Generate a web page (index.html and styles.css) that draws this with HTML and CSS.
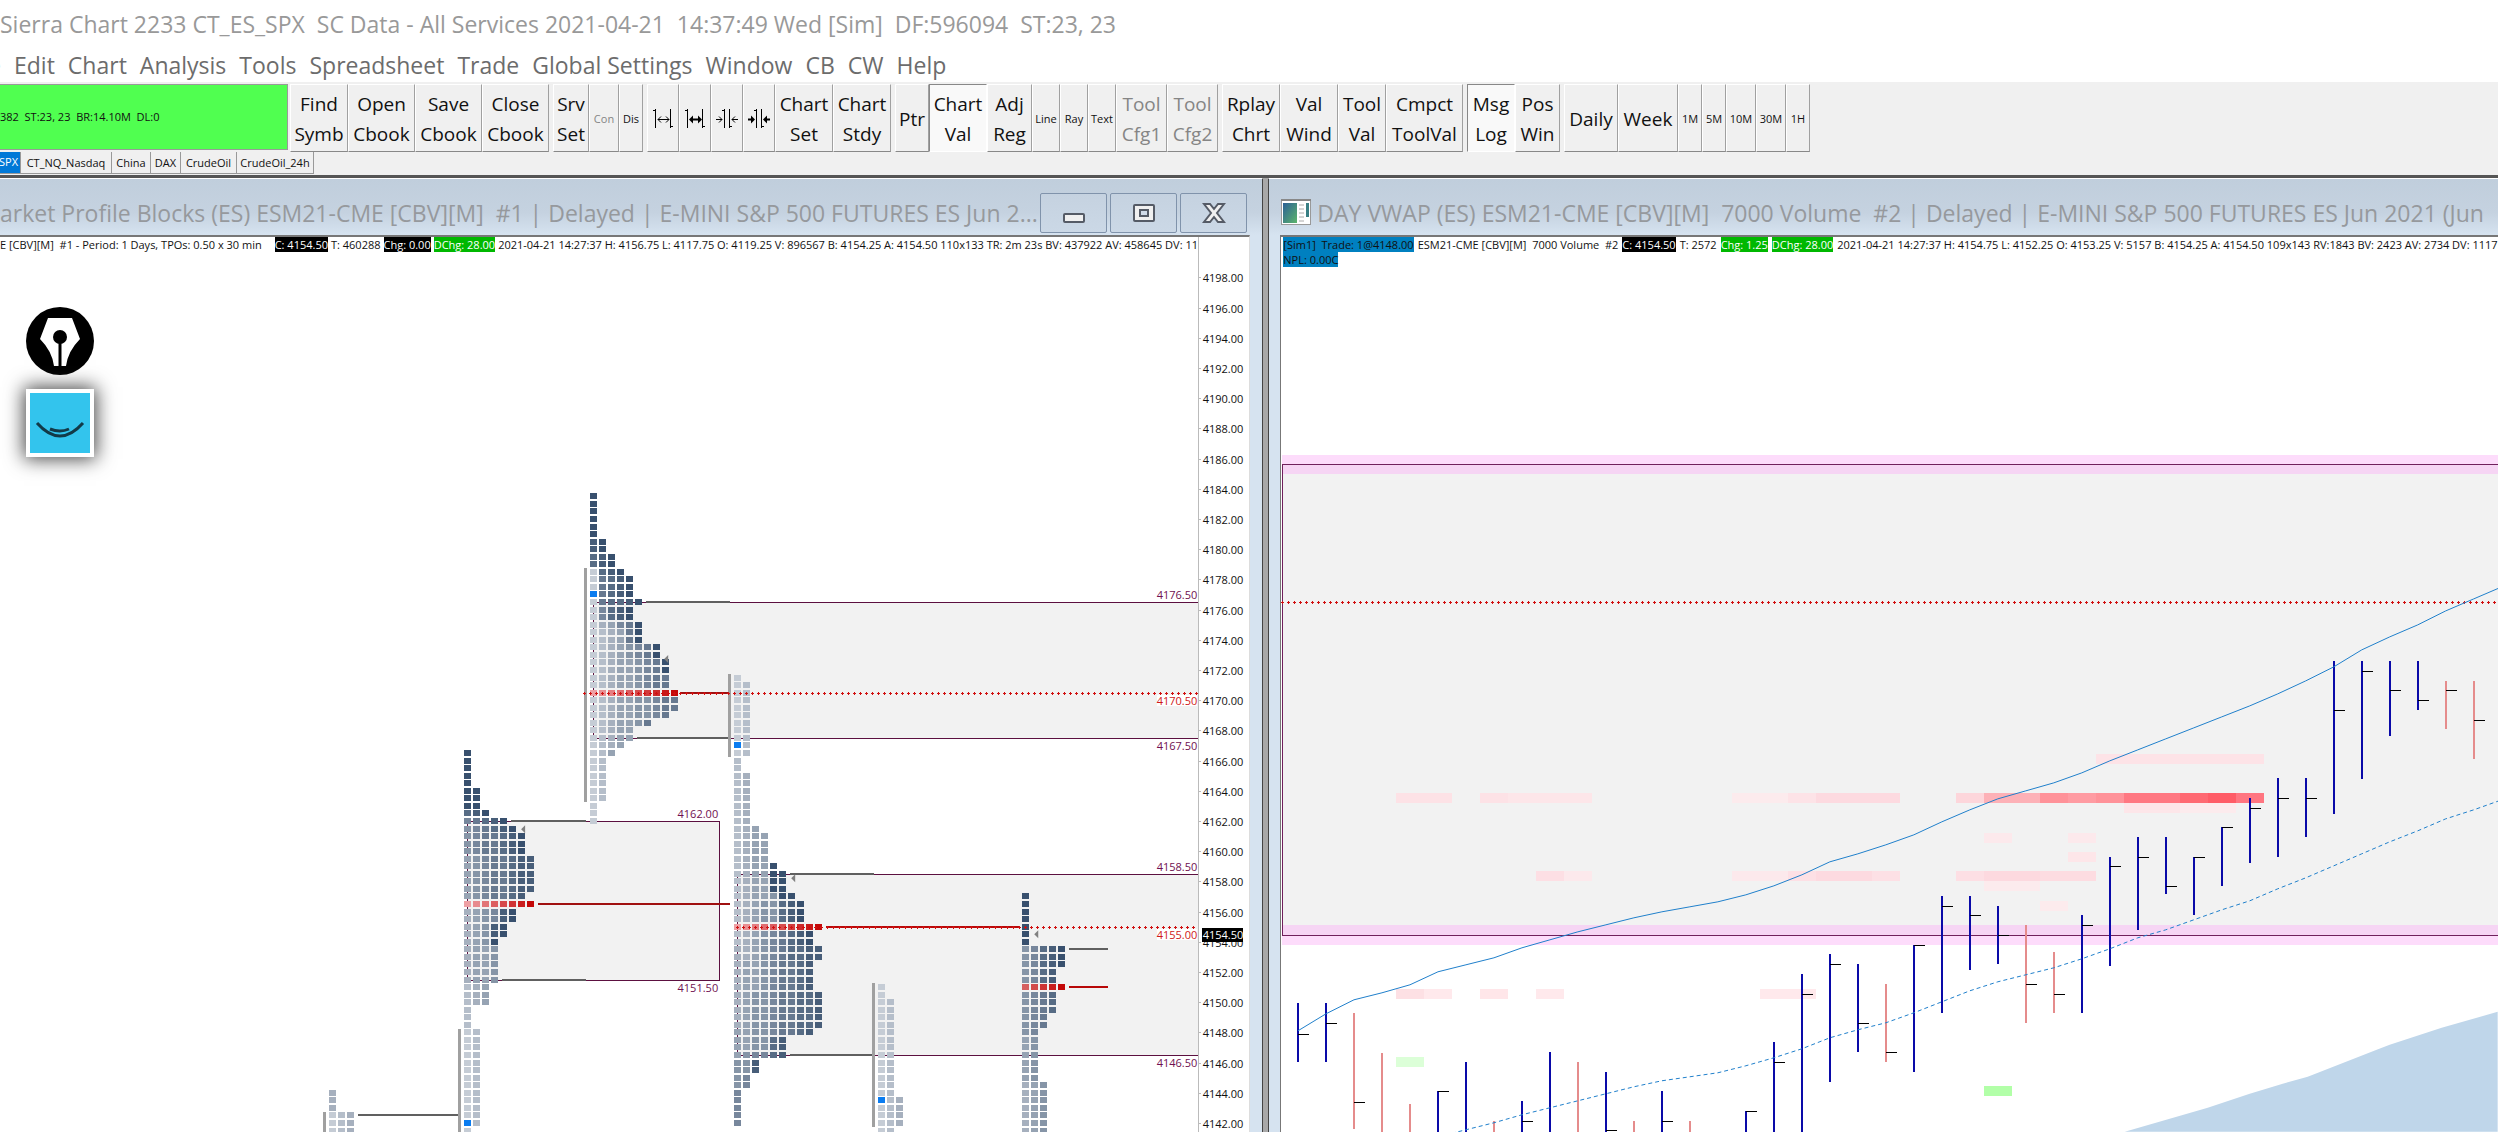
FILE: index.html
```html
<!DOCTYPE html>
<html lang="en">
<head>
<meta charset="utf-8">
<title>Sierra Chart</title>
<link rel="stylesheet" href="styles.css">
</head>
<body>
<div class="app">
  <header class="title">Sierra Chart 2233 CT_ES_SPX&nbsp; SC Data - All Services 2021-04-21&nbsp; 14:37:49 Wed [Sim]&nbsp; DF:596094&nbsp; ST:23, 23</header>
  <nav class="menu">
    <button class="cut">e</button><button>Edit</button><button>Chart</button><button>Analysis</button><button>Tools</button><button>Spreadsheet</button><button>Trade</button><button>Global Settings</button><button>Window</button><button>CB</button><button>CW</button><button>Help</button>
  </nav>
  <div class="toolbar">
    <div class="status">382&nbsp; ST:23, 23&nbsp; BR:14.10M&nbsp; DL:0</div>
    <div class="group">
      <button class="w58">Find<br>Symb</button><button class="w67">Open<br>Cbook</button><button class="w67">Save<br>Cbook</button><button class="w67">Close<br>Cbook</button>
    </div>
    <div class="group">
      <button class="w36">Srv<br>Set</button><button class="w30 small" disabled>Con</button><button class="w24 small">Dis</button>
    </div>
    <div class="group">
      <button class="w32" aria-label="Widen spacing"><svg width="20" height="20" viewBox="0 0 20 20"><path d="M0 1.5h2M2.500 0v19M17.500 0v19M18 17.500h2M5 10.500h11M8 7.500l-3 3 3 3M13 7.500l3 3-3 3" class="thin"/></svg></button><button class="w32" aria-label="Widen bars"><svg width="20" height="20" viewBox="0 0 20 20"><path d="M0 1.500h2M2.500 0v19M17.500 0v19M18 17.500h2" class="thin"/><path d="M4 10.500l4-4v3h5v-3l4 4-4 4v-3H8v3z"/></svg></button><button class="w32" aria-label="Narrow spacing"><svg width="22" height="20" viewBox="0 0 22 20"><path d="M6 1.500h2M8.500 0v19M13.500 0v19M14 17.500h2M0 10.500h6M16 10.500h6M3 7.500l3 3-3 3M19 7.500l-3 3 3 3" class="thin"/></svg></button><button class="w32" aria-label="Narrow bars"><svg width="22" height="20" viewBox="0 0 22 20"><path d="M6 1.500h2M8.500 0v19M13.500 0v19M14 17.500h2" class="thin"/><path d="M7 10.500l-4-4v3H0v2h3v3zM15 10.500l4-4v3h3v2h-3v3z"/></svg></button><button class="w58">Chart<br>Set</button><button class="w58">Chart<br>Stdy</button>
    </div>
    <div class="group">
      <button class="w34">Ptr</button><button class="w58 on">Chart<br>Val</button><button class="w45">Adj<br>Reg</button><button class="w28 small">Line</button><button class="w28 small">Ray</button><button class="w28 small">Text</button><button class="w51" disabled>Tool<br>Cfg1</button><button class="w51" disabled>Tool<br>Cfg2</button>
    </div>
    <div class="group">
      <button class="w58">Rplay<br>Chrt</button><button class="w58">Val<br>Wind</button><button class="w48">Tool<br>Val</button><button class="w77">Cmpct<br>ToolVal</button>
    </div>
    <div class="group">
      <button class="w48 on">Msg<br>Log</button><button class="w45">Pos<br>Win</button>
    </div>
    <div class="group">
      <button class="w54">Daily</button><button class="w60">Week</button><button class="w24 small">1M</button><button class="w24 small">5M</button><button class="w30 small">10M</button><button class="w30 small">30M</button><button class="w24 small">1H</button>
    </div>
  </div>
  <div class="tabs">
    <button class="w21 sel"><span>SPX</span></button><button class="w91">CT_NQ_Nasdaq</button><button class="w39">China</button><button class="w30">DAX</button><button class="w56">CrudeOil</button><button class="w77">CrudeOil_24h</button>
  </div>
  <main class="desk">
    <section class="win first">
      <div class="caption">
        <h2>arket Profile Blocks (ES) ESM21-CME [CBV][M]&nbsp; #1 | Delayed | E-MINI S&amp;P 500 FUTURES ES Jun 2...</h2>
        <div class="controls">
          <button aria-label="Minimize"><svg width="24" height="24" viewBox="0 0 24 24"><rect x="2" y="13" width="20" height="8" rx="1" class="glyph"/></svg></button>
          <button aria-label="Maximize"><svg width="24" height="24" viewBox="0 0 24 24"><rect x="2" y="4" width="20" height="16" rx="1" class="glyph"/><rect x="8" y="9" width="8" height="6" class="glyph hole"/></svg></button>
          <button aria-label="Close"><svg width="24" height="24" viewBox="0 0 24 24"><path d="M2 3h6l4 5 4-5h6l-7 9 7 9h-6l-4-5-4 5H2l7-9z" class="glyph"/></svg></button>
        </div>
      </div>
      <div class="view">
        <div class="info"><span class="lead">E [CBV][M]&nbsp; #1 - Period: 1 Days, TPOs: 0.50 x 30 min</span><span class="blk">C: 4154.50</span><span>T: 460288</span><span class="blk">Chg: 0.00</span><span class="grn">DChg: 28.00</span><span>2021-04-21 14:27:37 H: 4156.75 L: 4117.75 O: 4119.25 V: 896567 B: 4154.25 A: 4154.50 110x133 TR: 2m 23s BV: 437922 AV: 458645 DV: 11</span></div>
        <svg id="profile" class="chart" viewBox="0 256 1249 876"></svg>
      </div>
    </section>
    <section class="win second">
      <div class="caption">
        <svg class="logo" width="30" height="26" viewBox="0 0 30 26"><defs><linearGradient id="g" x2="1" y2="1"><stop offset="0" stop-color="#2b5f96"/><stop offset="1" stop-color="#5cb56b"/></linearGradient></defs><rect x=".5" y=".5" width="29" height="25" fill="#fff" stroke="#999"/><path d="M0 1h30" stroke="#888" stroke-width="2"/><rect x="2" y="4" width="14" height="20" fill="url(#g)"/><path d="M18 6h5M18 10h5M18 14h5M18 18h5M18 22h5" stroke="#aaa"/><rect x="25" y="4" width="3" height="14" fill="#397f84"/></svg>
        <h2>DAY VWAP (ES) ESM21-CME [CBV][M]&nbsp; 7000 Volume&nbsp; #2 | Delayed | E-MINI S&amp;P 500 FUTURES ES Jun 2021 (Jun</h2>
      </div>
      <div class="view">
        <div class="info two"><span class="blu">[Sim1]&nbsp; Trade: 1@4148.00</span><span>ESM21-CME [CBV][M]&nbsp; 7000 Volume&nbsp; #2</span><span class="blk">C: 4154.50</span><span>T: 2572</span><span class="grn">Chg: 1.25</span><span class="grn">DChg: 28.00</span><span>2021-04-21 14:27:37 H: 4154.75 L: 4152.25 O: 4153.25 V: 5157 B: 4154.25 A: 4154.50 109x143 RV:1843 BV: 2423 AV: 2734 DV: 1117</span></div>
        <div class="info npl"><span class="blu">NPL: 0.00C</span></div>
        <svg id="vwap" class="chart" viewBox="1281 268 1217 864"></svg>
      </div>
    </section>
  </main>
  <div class="dock">
    <svg width="68" height="68" viewBox="0 0 68 68"><circle cx="34" cy="34" r="34"/><path d="M22 11h24l8 21q-12 12-14 27H28q-2-15-14-27z" fill="#fff"/><circle cx="34" cy="30" r="7"/><path d="M34 30v29" stroke="#000" stroke-width="3"/></svg>
    <svg class="smile" width="60" height="60" viewBox="0 0 60 60"><path d="M7 30q23 26 46 0M20 36q10 4 19 0" fill="none" stroke="#123a48" stroke-width="3"/></svg>
  </div>
</div>
<script src="charts.js"></script>
</body>
</html>
```
FILE: styles.css
```css
* { box-sizing: border-box; }
body { margin: 0; background: #fff; font-family: "Open Sans", "Noto Sans", sans-serif; color: #111; }
button { font: inherit; color: inherit; border: 0; background: none; padding: 0; margin: 0; flex: none; white-space: nowrap; }
.app { height: 100vh; display: flex; flex-direction: column; overflow: hidden; position: relative; }

.title { height: 48px; line-height: 48px; font-size: 23px; color: #999; white-space: nowrap; flex: none; }
.menu { height: 34px; display: flex; gap: 13px; font-size: 23px; line-height: 34px; color: #6c6c6c; flex: none; }
.menu .cut { width: 1px; display: flex; justify-content: flex-end; overflow: hidden; }

.toolbar { height: 70px; padding-top: 2px; background: #f0f0f0; display: flex; gap: 4px; flex: none; overflow: hidden; }
.status { width: 288px; height: 66px; margin-right: -2px; background: #50ff50; border: solid #999; border-width: 1px 1px 1px 0; font-size: 11px; line-height: 64px; flex: none; white-space: nowrap; }
.group { display: flex; flex: none; height: 68px; }
.group button { height: 68px; padding-top: 2px; font-size: 19px; line-height: 30px; border-right: 1px solid #a0a0a0; border-bottom: 1px solid #888; border-top: 1px solid #fff; border-left: 1px solid #fff; display: block; text-align: center; }
.group .small { font-size: 11px; }
.group button:disabled { color: #858585; }
.group .on { background: #f9f9f9; border-color: #888 #fff #fff #888; }
.group svg { display: block; margin: 0 auto; }
.thin { fill: none; stroke: #000; }
.w21 { width: 21px; } .w24 { width: 24px; } .w28 { width: 28px; } .w30 { width: 30px; }
.w32 { width: 32px; } .w34 { width: 34px; } .w36 { width: 36px; } .w39 { width: 39px; }
.w45 { width: 45px; } .w48 { width: 48px; } .w51 { width: 51px; } .w54 { width: 54px; }
.w56 { width: 56px; } .w58 { width: 58px; } .w60 { width: 60px; } .w67 { width: 67px; }
.w77 { width: 77px; } .w91 { width: 91px; }

.tabs { height: 23px; background: #f0f0f0; display: flex; flex: none; }
.tabs button { height: 22px; font-size: 11px; line-height: 20px; border-right: 1px solid #999; border-bottom: 1px solid #999; overflow: hidden; }
.tabs .sel { background: #0078d7; color: #fff; display: flex; justify-content: flex-end; padding-right: 2px; }

.desk { flex: 1; min-height: 0; display: flex; gap: 5px; background: #a8a8a8; border-top: 3px solid #555; }
.win { background: #d6e3f0; border-top: 1px solid #fff; min-width: 0; display: flex; flex-direction: column; overflow: hidden; }
.first { flex: 1263 1 0; padding-right: 12px; border-right: 1px solid #444; }
.second { flex: 1230 1 0; padding-left: 11px; border-left: 1px solid #444; }
.caption { height: 56px; flex: none; display: flex; align-items: center; gap: 6px; background: linear-gradient(#c0cedc, #c5d2e0 60%, #d6e3f0); }
.first .caption { margin-right: -12px; padding-right: 15px; gap: 0; }
.second .caption { margin-left: -11px; padding-left: 12px; }
.caption h2 { margin: 0; padding-top: 12px; font-size: 23px; line-height: 44px; font-weight: 400; color: #96999d; white-space: nowrap; overflow: hidden; flex: 1; }
.logo { flex: none; margin-top: 10px; }
.controls { display: flex; gap: 3px; align-self: flex-end; margin-bottom: 2px; flex: none; }
.controls button { width: 67px; height: 40px; border: 1px solid #8093ab; border-radius: 2px; background: linear-gradient(#c5d2e0, #cbd8e6); display: grid; place-items: center; }
.glyph { fill: #f0f0f0; stroke: #555b66; stroke-width: 2; }
.hole { fill: #d0dbe8; }

.view { flex: 1; background: #fff; border-top: 2px solid #777; min-height: 0; overflow: hidden; }
.second .view { border-left: 1px solid #777; }
.first .view { border-right: 1px solid #ddd; }
.info { height: 19px; display: flex; gap: 3px; font-size: 11px; line-height: 15px; white-space: nowrap; overflow: hidden; }
.info span { flex: none; height: 15px; }
.first .info { margin-right: 50px; border-right: 1px solid #bbb; }
.lead { padding-right: 10px; }
.blk { background: #000; color: #fff; }
.grn { background: #00b800; color: #fff; }
.blu { background: #0080c0; }
.two { height: 15px; padding-left: 2px; gap: 4px; }
.npl { height: 16px; padding-left: 2px; }
.chart { display: block; width: 100%; height: auto; }
.chart text { font-size: 11px; }

.dock { position: absolute; left: 26px; top: 307px; display: flex; flex-direction: column; gap: 14px; }
.smile { background: #33c4ed; border: 4px solid #fff; width: 68px; height: 68px; box-shadow: 0 0 18px 2px #444; }
```
FILE: charts.js
```js
const NS = 'http://www.w3.org/2000/svg';

function pen(svg) {
  const add = (tag, attrs, text) => {
    const el = document.createElementNS(NS, tag);
    for (const key in attrs) el.setAttribute(key, attrs[key]);
    if (text) el.textContent = text;
    svg.append(el);
  };
  return {
    add,
    rect: (x, y, width, height, fill) => add('rect', { x, y, width, height, fill, 'shape-rendering': 'crispEdges' }),
    text: (x, y, text, fill) => add('text', { x, y, fill, 'text-anchor': 'end' }, text),
    dots(x1, x2, y) {
      for (let x = x1; x < x2; x += 6) {
        this.rect(x, y, 3, 1, '#d01010');
        this.rect(x + 1, y - 1, 1, 3, '#d01010');
      }
    }
  };
}

const mix = (a, b, t) => 'rgb(' + a.map((v, i) => Math.round(v + (b[i] - v) * t)).join(',') + ')';
const priceY = price => Math.round(602 + (4176.5 - price) * 15.1);

function drawProfile() {
  const p = pen(document.getElementById('profile'));
  const maroon = '#5c1040';

  for (const [left, right, top, bottom, closed] of [[593, 1198, 4176.5, 4167.5], [467, 719, 4162, 4151.5, true], [737, 1198, 4158.5, 4146.5]]) {
    const y1 = priceY(top), y2 = priceY(bottom);
    p.rect(left, y1, right - left, y2 - y1, '#f2f2f2');
    p.rect(left, y1, right - left, 1, maroon);
    p.rect(left, y2, right - left, 1, maroon);
    p.rect(left, y1, 1, y2 - y1, maroon);
    if (closed) p.rect(right, y1, 1, y2 - y1 + 1, maroon);
    p.text(right - 1, y1 - 3, top.toFixed(2), '#701050');
    p.text(right - 1, y2 + 12, bottom.toFixed(2), '#701050');
  }

  for (const [x, top, bottom] of [[323, 1112, 1132], [458, 1029, 1132], [584, 568, 802], [728, 674, 757], [872, 983, 1127]]) {
    p.rect(x, top, 3, bottom - top, '#a0a0a0');
  }

  // One string per run of rows, half a point apart: 0-9 runs from light to dark, b is the open, r the point of control.
  const profiles = [
    [329, 4144, '2*3 012*3'],
    [464, 4166.5, '9*5 99*3 789 56789 456789 4566789*3 34566788*5 3456678 rrrrrrrr 234589*2 23489*2 2349 2334*5 123*3 1*3 01*12 b1 0'],
    [590, 4183.5, '9*6 89*2 789*2 0789 06789*2 b6789 067789 05789*2 023569 012369*2 01234569*2 012334569*2 012334566*2 rrrrrrrrrr 0123344566*2 012334456 0123346 01233*2 0123 013 01*6 0*3'],
    [734, 4171.5, '0 01*8 b1 01 1*2 12*7 123 1233*4 12339 123399*3 1233499 12344789*3 rrrrrrrrrr 123456789*2 2234567788*2 233456678*4 2344566778*5 334456678 334478*2 345578 448*2 45*2 5*5'],
    [878, 4151, '0*2 01*13 b12 012*3 01'],
    [1022, 4157, '9*7 45789*3 4578*2 rrrrr 4567*3 456*2 45 34*6 234*8']
  ];
  for (const [x, top, code] of profiles) {
    let price = top;
    for (const run of code.split(' ')) {
      const [row, count = 1] = run.split('*');
      for (let n = 0; n < count; n++, price -= 0.5) {
        [...row].forEach((c, i) => {
          let fill = mix([197, 204, 213], [56, 80, 110], c / 9);
          if (c === 'b') fill = '#0a7cf0';
          if (c === 'r') fill = mix(row.length > 5 ? [238, 160, 164] : [214, 96, 96], [196, 8, 8], i / (row.length - 1));
          p.rect(x + 9 * i, priceY(price) - 3, 7, 6, fill);
        });
      }
    }
  }

  for (const [x1, x2, price, color] of [
    [358, 458, 4142.5, '#606060'], [511, 586, 4162, '#606060'], [502, 586, 4151.5, '#606060'], [538, 730, 4156.5, '#a01010'],
    [646, 730, 4176.5, '#606060'], [637, 728, 4167.5, '#606060'], [680, 729, 4170.5, '#a01010'],
    [790, 874, 4158.5, '#606060'], [790, 872, 4146.5, '#606060'], [826, 1019, 4155, '#b80808'],
    [1069, 1108, 4153.5, '#606060'], [1069, 1108, 4151, '#b80808']
  ]) p.rect(x1, priceY(price) - 1, x2 - x1, 2, color);

  p.dots(583, 1197, priceY(4170.5));
  p.dots(736, 1197, priceY(4155));
  for (const [x, y] of [[521, 829], [664, 659], [791, 878], [1034, 934]]) {
    p.add('path', { d: `M${x} ${y}l4 -4v8z`, fill: '#808080' });
  }
  for (const price of [4170.5, 4155]) {
    p.rect(1157, priceY(price) + 2, 40, 11, '#fff');
    p.text(1197, priceY(price) + 12, price.toFixed(2), '#d01818');
  }

  p.rect(1198, 256, 1, 876, '#bbb');
  for (let price = 4198; price >= 4142; price -= 2) {
    p.rect(1199, priceY(price), 2, 1, '#bbb');
    p.text(1243, priceY(price) + 5, price.toFixed(2), '#111');
  }
  p.rect(1202, 928, 41, 14, '#000');
  p.text(1243, 939, '4154.50', '#fff');
}

function drawVwap() {
  const p = pen(document.getElementById('vwap'));
  p.rect(1282, 464, 1216, 472, '#f2f2f2');
  p.rect(1282, 455, 1216, 9, '#fddcfb');
  p.rect(1282, 464, 1216, 10, '#f6d5f4');
  p.rect(1282, 925, 1216, 10, '#f6d5f4');
  p.rect(1282, 935, 1216, 10, '#fddcfb');

  const heat = [
    [1396, 1452, 793, '#fde2e6'], [1480, 1508, 793, '#fde2e6'], [1508, 1592, 793, '#fde6e9'],
    [1732, 1788, 793, '#fcebed'], [1788, 1816, 793, '#fde3e7'], [1816, 1900, 793, '#fddae0'],
    [1536, 1564, 871, '#fddfe4'], [1564, 1592, 871, '#fce9ec'], [1732, 1788, 871, '#fce9ec'],
    [1788, 1816, 871, '#fde0e5'], [1816, 1872, 871, '#fddae0'], [1872, 1900, 871, '#fde0e5'],
    [1396, 1424, 989, '#fde0e4'], [1424, 1452, 989, '#ffe9ec'], [1480, 1508, 989, '#ffe6e9'],
    [1536, 1564, 989, '#ffe9ec'], [1760, 1816, 989, '#ffe9ec'],
    [2096, 2264, 754, '#fde3e7'], [1956, 1984, 793, '#fdd6db'], [1984, 2040, 793, '#fdb1b7'],
    [2040, 2068, 793, '#ff9299'], [2068, 2096, 793, '#ff9ba2'], [2096, 2124, 793, '#ff9299'],
    [2124, 2180, 793, '#ff7882'], [2180, 2208, 793, '#ff6972'], [2208, 2236, 793, '#ff5c67'], [2236, 2264, 793, '#ff7580'],
    [2124, 2180, 803, '#fde6e9'], [2180, 2236, 803, '#fcebed'],
    [1984, 2012, 833, '#fce9ec'], [2068, 2096, 833, '#fce9ec'], [2068, 2096, 852, '#fde6e9'],
    [1956, 1984, 871, '#fddfe4'], [1984, 2040, 871, '#fdd9df'], [2040, 2096, 871, '#fddce1'],
    [1984, 2040, 881, '#fcebed'], [2040, 2068, 901, '#fcebed'],
    [1396, 1424, 1057, '#dcffd8'], [1984, 2012, 1086, '#b2ffa8']
  ];
  for (const [x1, x2, y, color] of heat) p.rect(x1, y, x2 - x1, 10, color);

  p.add('path', { d: 'M2125 1132L2208 1108L2250 1094L2283 1084L2308 1077L2377 1050L2390 1045L2442 1028L2498 1012V1132z', fill: '#bfd6ea' });
  p.rect(1282, 464, 1216, 1, '#70205c');
  p.rect(1282, 935, 1216, 1, '#70205c');
  p.rect(1282, 464, 1, 472, '#70205c');
  p.dots(1281, 2498, 602);

  // High, low, close; a leading minus on the high marks a down bar.
  const bars = [
    [1003, 1062, 1034], [1003, 1062, 1023], [-1013, 1129, 1102], [-1053, 1132], [-1104, 1132], [1091, 1132, 1091], [1062, 1132],
    [-1121, 1132], [1101, 1132, 1121], [1052, 1132], [-1062, 1132], [1072, 1132, 1130], [-1121, 1132], [1091, 1132, 1121],
    [-1121, 1132], null, [1111, 1132, 1111], [1042, 1132, 1062], [974, 1132, 994], [954, 1082, 964], [964, 1052, 1023],
    [-984, 1062, 1052], [945, 1072, 945], [896, 1013, 906], [896, 970, 915], [906, 964, 935], [-925, 1023, 984],
    [-952, 1013, 994], [915, 1013, 925], [857, 966, 866], [837, 930, 857], [837, 894, 886], [857, 915, 857], [827, 886, 827],
    [798, 863, 808], [778, 857, 798], [778, 837, 798], [661, 814, 710], [661, 779, 671], [661, 736, 690], [661, 710, 700],
    [-681, 729, 690], [-681, 759, 720]
  ];
  bars.forEach((bar, i) => {
    if (!bar) return;
    const [high, low, close] = bar, x = 1297 + 28 * i;
    p.rect(x, Math.abs(high), 2, low - Math.abs(high), high < 0 ? '#e58c8c' : '#0a0aa8');
    if (close) p.rect(x + 1, close, 11, 1, '#000');
  });

  const upper = [1031, 1014, 1000, 993, 985, 972, 965, 958, 948, 940, 932, 925, 918, 912, 907, 902, 895, 886, 875, 862, 854, 845, 835, 822, 810, 799, 791, 783, 773, 761, 750, 739, 728, 717, 706, 694, 681, 667, 650, 637, 625, 611, 599, 587];
  const middle = [1137, 1130, 1123, 1115, 1108, 1101, 1094, 1087, 1081, 1077, 1073, 1066, 1058, 1049, 1038, 1030, 1023, 1013, 1002, 991, 982, 975, 968, 959, 949, 938, 930, 920, 910, 901, 889, 878, 866, 854, 842, 831, 819, 810, 800];
  const line = (ys, first, extra) => p.add('polyline', {
    points: ys.map((y, i) => `${1298 + 28 * (i + first)},${y}`).join(' '),
    fill: 'none', stroke: '#1f7fcb', ...extra
  });
  line(upper, 0);
  line(middle, 5, { 'stroke-dasharray': '4 3' });
}

drawProfile();
drawVwap();
```
